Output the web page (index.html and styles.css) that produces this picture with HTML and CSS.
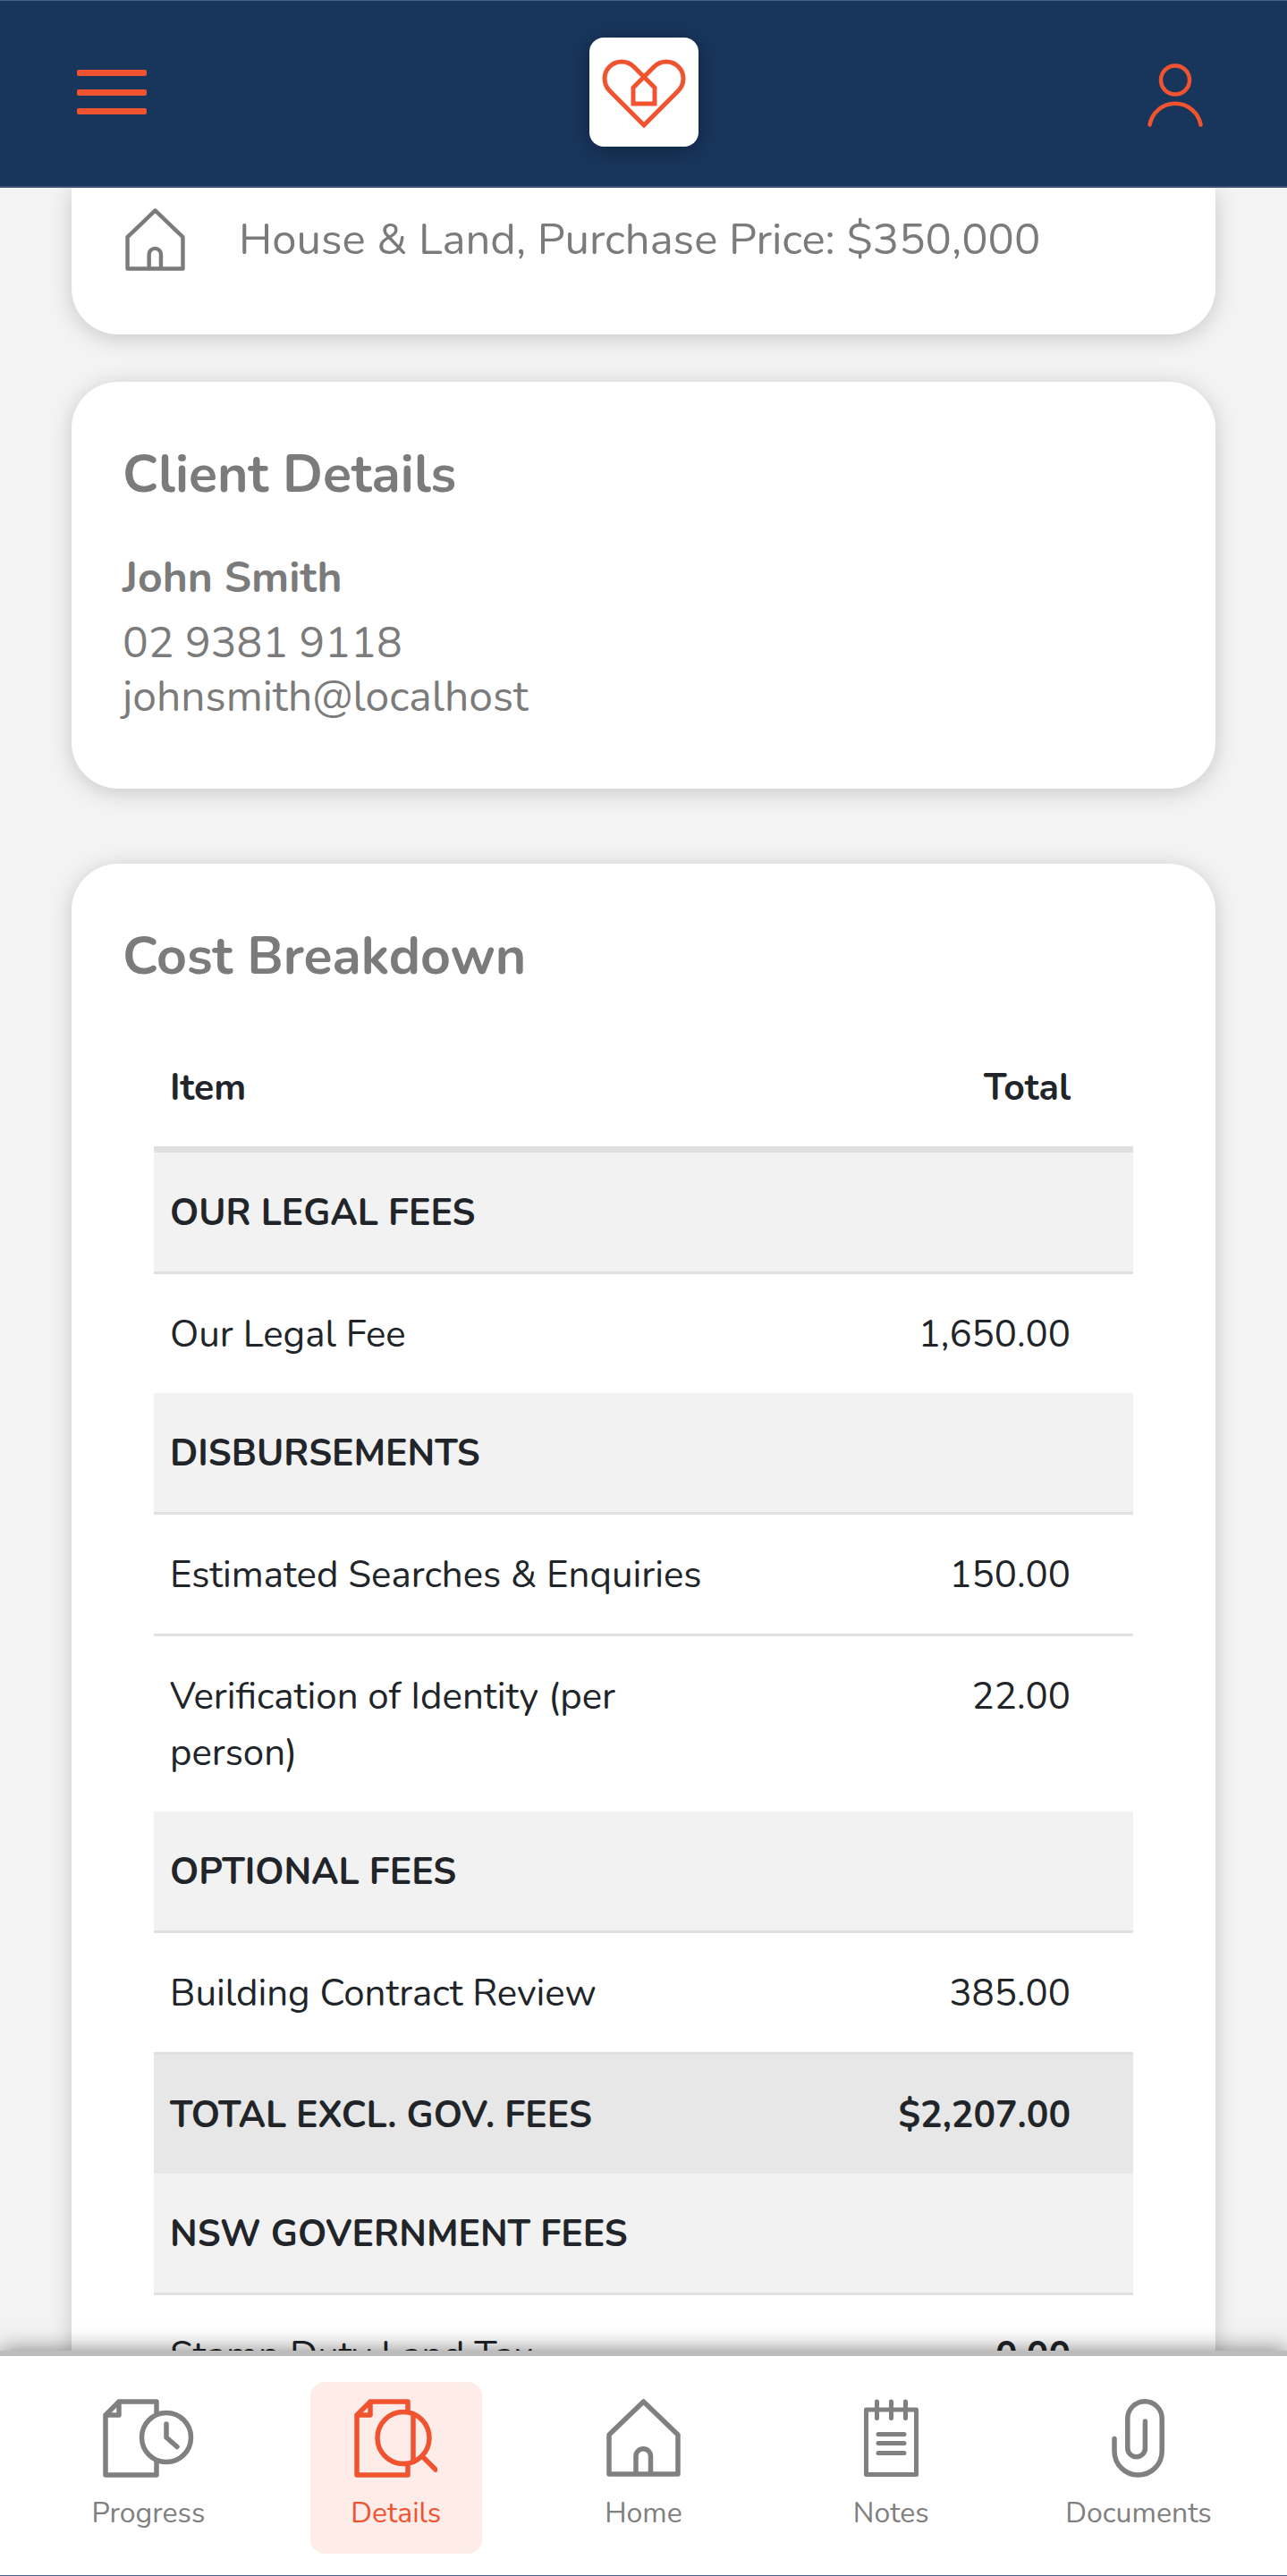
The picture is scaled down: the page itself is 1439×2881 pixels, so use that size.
FILE: index.html
```html
<!DOCTYPE html>
<html lang="en">

<head>
    <meta charset="UTF-8">
    <meta name="viewport" content="width=device-width, initial-scale=1.0">
    <title>Details</title>
    <link rel="stylesheet" href="styles.css">
</head>

<body>
    <header class="top-bar">
        <button class="icon-button" type="button" aria-label="Menu">
            <svg width="78" height="50" viewBox="0 0 78 50" fill="currentColor">
                <rect width="78" height="7" rx="2" />
                <rect y="22" width="78" height="7" rx="2" />
                <rect y="43" width="78" height="7" rx="2" />
            </svg>
        </button>
        <a class="logo" href="#" aria-label="Dashboard">
            <svg width="122" height="122" viewBox="0 0 122 122" fill="none" stroke="currentColor" stroke-width="5">
                <path d="M61 98L22.600 59.400A19 19 0 0 1 49.500 32.500L73 56V74H49V56L72.500 32.500A19 19 0 0 1 99.400 59.400Z" />
            </svg>
        </a>
        <button class="icon-button" type="button" aria-label="Account">
            <svg width="62" height="78" viewBox="0 -7 62 78" fill="none" stroke="currentColor" stroke-width="4.500" stroke-linecap="round">
                <circle cx="31" cy="18.500" r="16" />
                <path d="M2.500 68.500A29 29 0 0 1 59.500 68.500" />
            </svg>
        </button>
    </header>

    <main class="content">
        <section class="card property">
            <svg width="67" height="70" viewBox="0 0 83 87" fill="none" stroke="currentColor" stroke-width="5.500" stroke-linejoin="round">
                <path d="M3 84V40L41.500 3L80 40V84ZM33 84V64A8.250 8.250 0 0 1 49.500 64V84" />
            </svg>
            <span>House &amp; Land, Purchase Price: $350,000</span>
        </section>

        <section class="card client">
            <h2>Client Details</h2>
            <h3>John Smith</h3>
            <p>02 9381 9118</p>
            <p>johnsmith@localhost</p>
        </section>

        <section class="card costs">
            <h2>Cost Breakdown</h2>
            <table class="cost-table">
                <thead>
                    <tr>
                        <th class="item">Item</th>
                        <th class="total">Total</th>
                    </tr>
                </thead>
                <tbody>
                    <tr class="group">
                        <th colspan="2">OUR LEGAL FEES</th>
                    </tr>
                    <tr>
                        <td>Our Legal Fee</td>
                        <td class="total">1,650.00</td>
                    </tr>
                    <tr class="group">
                        <th colspan="2">DISBURSEMENTS</th>
                    </tr>
                    <tr>
                        <td>Estimated Searches &amp; Enquiries</td>
                        <td class="total">150.00</td>
                    </tr>
                    <tr>
                        <td>Verification of Identity (per person)</td>
                        <td class="total">22.00</td>
                    </tr>
                    <tr class="group">
                        <th colspan="2">OPTIONAL FEES</th>
                    </tr>
                    <tr>
                        <td>Building Contract Review</td>
                        <td class="total">385.00</td>
                    </tr>
                    <tr class="subtotal">
                        <th>TOTAL EXCL. GOV. FEES</th>
                        <th class="total">$2,207.00</th>
                    </tr>
                    <tr class="group">
                        <th colspan="2">NSW GOVERNMENT FEES</th>
                    </tr>
                    <tr>
                        <td>Stamp Duty Land Tax</td>
                        <th class="total">0.00</th>
                    </tr>
                </tbody>
            </table>
        </section>
    </main>

    <nav class="bottom-nav">
        <a href="#">
            <svg width="102" height="88" viewBox="0 0 102 88" fill="none" stroke="currentColor" stroke-width="5.500" stroke-linecap="round" stroke-linejoin="round">
                <path d="M60 17V3H18L3 18V85H60V69M18 3V18H3" />
                <circle cx="71" cy="43" r="27.500" />
                <path d="M71 28V43L83 53.500" />
            </svg>
            <span>Progress</span>
        </a>
        <a href="#" class="active">
            <svg width="93" height="88" viewBox="0 0 93 88" fill="none" stroke="currentColor" stroke-width="5.500" stroke-linecap="round" stroke-linejoin="round">
                <path d="M60 14V3H18L3 18V85H60V73M18 3V18H3" />
                <circle cx="55" cy="43.500" r="29" />
                <path d="M66 18V69M77 65L91 79" />
            </svg>
            <span>Details</span>
        </a>
        <a href="#">
            <svg width="83" height="88" viewBox="0 0 83 88" fill="none" stroke="currentColor" stroke-width="5.500" stroke-linejoin="round">
                <path d="M3 84V40L41.500 3L80 40V84ZM33 84V64A8.250 8.250 0 0 1 49.500 64V84" />
            </svg>
            <span>Home</span>
        </a>
        <a href="#">
            <svg width="61" height="88" viewBox="0 0 61 88" fill="none" stroke="currentColor" stroke-width="5" stroke-linecap="round" stroke-linejoin="round">
                <path d="M2.500 12H58.500V84.500H2.500Z" />
                <path d="M14.500 3V21.500M30.500 3V21.500M46.500 3V21.500" />
                <path d="M16 39.500H45M16 49.500H45M16 60.500H45" />
            </svg>
            <span>Notes</span>
        </a>
        <a href="#">
            <svg width="60" height="88" viewBox="0 0 60 88" fill="none" stroke="currentColor" stroke-width="5.500" stroke-linecap="round">
                <path d="M3 44.500V58.500A26.600 26.600 0 0 0 56.200 58.500V22A19.200 19.200 0 0 0 17.800 22V55A9.800 9.800 0 0 0 37.400 55V25" />
            </svg>
            <span>Documents</span>
        </a>
    </nav>
</body>

</html>
```
FILE: styles.css
```css
* {
    box-sizing: border-box;
}

body {
    margin: 0;
    height: 100vh;
    display: flex;
    flex-direction: column;
    background-color: #f3f3f3;
    color: #7b7b7b;
    font-family: "Nunito", "Noto Sans", sans-serif;
    font-size: 48px;
    line-height: 60px;
}

h2,
h3,
p {
    margin: 0;
}

svg {
    display: block;
}

.top-bar {
    height: 210px;
    flex-shrink: 0;
    display: flex;
    align-items: center;
    justify-content: space-between;
    padding: 0 80px 4px;
    background-color: #18355c;
    border-top: 1px solid #46628c;
    border-bottom: 2px solid #3c5074;
}

.icon-button {
    width: 90px;
    height: 90px;
    padding: 0;
    display: flex;
    align-items: center;
    justify-content: center;
    border: none;
    background: none;
    color: #f0532f;
    cursor: pointer;
}

.logo {
    border-radius: 16px;
    background-color: #fff;
    color: #f0532f;
    box-shadow: 0 4px 24px rgba(0, 0, 0, 0.3);
}

.content {
    flex: 1;
    min-height: 0;
    padding: 0 80px;
    overflow-y: auto;
    scrollbar-width: none;
}

.card {
    padding: 64px 57px 73px;
    border-radius: 52px;
    background-color: #fff;
    box-shadow: 0 4px 24px rgba(0, 0, 0, 0.18);
}

.property {
    display: flex;
    align-items: center;
    gap: 60px;
    padding: 23px 60px 71px;
    margin-bottom: 53px;
    border-radius: 0 0 52px 52px;
    font-size: 49px;
}

.client {
    margin-bottom: 84px;
}

.card h2 {
    margin-bottom: 39px;
    font-size: 59px;
    line-height: 80px;
    font-weight: 700;
}

.card h3 {
    margin-bottom: 13px;
    font-size: 48px;
    font-weight: 700;
}

.client h2 {
    margin-bottom: 45px;
}

.costs {
    padding-left: 92px;
    padding-right: 92px;
}

.costs h2 {
    margin-left: -35px;
}

.cost-table {
    width: 100%;
    border-spacing: 0;
    color: #212529;
    font-size: 42px;
    line-height: 63px;
}

.cost-table th,
.cost-table td {
    padding: 36px 18px 34px;
    text-align: left;
    vertical-align: top;
}

.cost-table th {
    font-size: 41px;
    font-weight: 700;
}

.cost-table .item {
    width: 58%;
}

.cost-table .total {
    padding-right: 70px;
    text-align: right;
}

.cost-table thead th {
    border-bottom: 7px solid #dee0e2;
}

.cost-table tbody td,
.cost-table tbody .total,
.cost-table .subtotal th {
    border-top: 3px solid #dfe0e3;
}

.cost-table .group {
    background-color: #f2f2f2;
}

.cost-table .subtotal {
    background-color: #e7e7e7;
}

.bottom-nav {
    position: relative;
    flex-shrink: 0;
    display: flex;
    justify-content: space-between;
    padding: 29px 70px 24px;
    background-color: #fff;
    border-top: 6px solid #bcbcbc;
    border-bottom: 1px solid #4a6287;
    box-shadow: 0 0 24px rgba(0, 0, 0, 0.5);
}

.bottom-nav a {
    width: 192px;
    height: 192px;
    padding-top: 19px;
    display: flex;
    flex-direction: column;
    align-items: center;
    gap: 20px;
    border-radius: 16px;
    color: #808080;
    font-size: 32px;
    line-height: 40px;
    text-decoration: none;
}

.bottom-nav .active {
    background-color: #feece9;
    color: #f0532f;
}
```
